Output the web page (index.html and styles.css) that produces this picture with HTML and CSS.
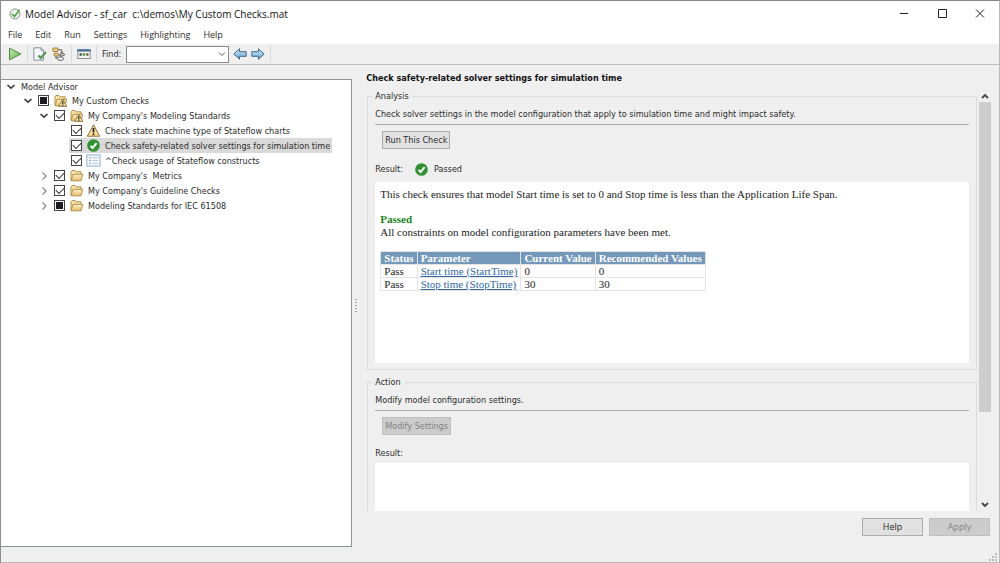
FILE: index.html
```html
<!DOCTYPE html>
<html lang="en">
<head>
<meta charset="utf-8">
<title>Model Advisor - sf_car</title>
<link rel="stylesheet" href="styles.css">
</head>
<body>
<svg class="defs" aria-hidden="true">
  <defs>
    <linearGradient id="gold" x1="0" y1="0" x2="0" y2="1"><stop offset="0" stop-color="#fff3c8"/><stop offset="1" stop-color="#e5bb66"/></linearGradient>
    <linearGradient id="blue" x1="0" y1="0" x2="0" y2="1"><stop offset="0" stop-color="#d9effc"/><stop offset="1" stop-color="#5d9fd0"/></linearGradient>
    <linearGradient id="lime" x1="0" y1="0" x2="1" y2="1"><stop offset="0" stop-color="#c9efb4"/><stop offset="1" stop-color="#5fb04c"/></linearGradient>
    <symbol id="open" viewBox="0 0 12 12"><path d="M2.5 4 6 7.200 9.500 4" fill="none" stroke="#3a3a3e" stroke-width="1.600"/></symbol>
    <symbol id="closed" viewBox="0 0 12 12"><path d="M4.500 2.500 8 6 4.500 9.500" fill="none" stroke="#8b8b8b" stroke-width="1.300"/></symbol>
    <symbol id="folder" viewBox="0 0 14 13">
      <path d="M1.500 11V2.800L2.500 1.500H5.500L6.500 2.800H11.500V5.500" fill="#f8e2a4" stroke="#b3904c" stroke-linejoin="round"/>
      <path d="M1.500 11.800 3.500 5.300H13.200L11.500 11.800Z" fill="url(#gold)" stroke="#b3904c" stroke-linejoin="round"/>
    </symbol>
    <symbol id="triangle" viewBox="0 0 14 13">
      <path d="M7 .8 13.200 12.200H.8Z" fill="#fbdf94" stroke="#8a6f3a" stroke-linejoin="round"/>
      <path d="M7 4V8.500M7 9.600V11.200" stroke="#1b1b1b" stroke-width="1.700"/>
    </symbol>
    <symbol id="folder-warn" viewBox="0 0 14 13">
      <use href="#folder" width="14" height="13"/>
      <path d="M9.300 5 13.300 12.400H5.300Z" fill="#fbdf94" stroke="#7d6433" stroke-width=".8" stroke-linejoin="round"/>
      <path d="M9.300 7.200V10M9.300 10.600V11.700" stroke="#222" stroke-width="1.200"/>
    </symbol>
    <symbol id="pass" viewBox="0 0 14 14">
      <circle cx="7" cy="7" r="6.800" fill="#329133"/>
      <path d="M3.800 7.300 6.100 9.700 10.300 4.500" fill="none" stroke="#fff" stroke-width="2"/>
    </symbol>
    <symbol id="list" viewBox="0 0 14 12">
      <rect x=".8" y=".8" width="12.400" height="10.400" fill="#f3f8fd" stroke="#9cb6cc"/>
      <path d="M3 3.500H4.500M3 6H4.500M3 8.500H4.500" stroke="#5f93c0"/>
      <path d="M6 3.500H11.500M6 6H11.500M6 8.500H11.500" stroke="#b9cad8"/>
    </symbol>
    <symbol id="arrow" viewBox="0 0 14 12">
      <path d="M.8 6 6.500.8V3.700H13.200V8.300H6.500V11.200Z" fill="url(#blue)" stroke="#41688a" stroke-linejoin="round"/>
    </symbol>
  </defs>
</svg>

<div class="window">
  <header class="titlebar">
    <svg class="app-icon" viewBox="0 0 12 12"><circle cx="6" cy="6" r="5" fill="#eef1ec" stroke="#8d958c"/><path d="M3 6 5.500 8.500 10.500 1.800" fill="none" stroke="#4ba03f" stroke-width="1.600"/></svg>
    <h1 class="window-title">Model Advisor - sf_car&nbsp; c:\demos\My Custom Checks.mat</h1>
    <div class="window-controls">
      <button aria-label="Minimize"><svg viewBox="0 0 10 10"><path d="M1 4.500H9" stroke="#222"/></svg></button>
      <button aria-label="Maximize"><svg viewBox="0 0 10 10"><path d="M1.500.5H9.500V8.500H1.500Z" fill="none" stroke="#222"/></svg></button>
      <button aria-label="Close"><svg viewBox="0 0 10 10"><path d="M1 .5 9 8.500M9 .5 1 8.500" stroke="#222"/></svg></button>
    </div>
  </header>

  <nav class="menubar" aria-label="Menu">
    <button>File</button><button>Edit</button><button>Run</button><button>Settings</button><button>Highlighting</button><button>Help</button>
  </nav>

  <div class="toolbar">
    <button class="tool" aria-label="Run"><svg viewBox="0 0 14 14"><path d="M1.500 1.200 12.800 7 1.500 12.800Z" fill="url(#lime)" stroke="#4c8743" stroke-linejoin="round"/></svg></button>
    <span class="divider"></span>
    <button class="tool" aria-label="Report"><svg viewBox="0 0 14 14"><path d="M.8.8H8L10.500 3.300V13.200H.8Z" fill="#f1f4f8" stroke="#8b929c"/><path d="M8 .8V3.300H10.500" fill="none" stroke="#8b929c"/><path d="M5.500 8.500 7.800 11 13 5" fill="none" stroke="#569a52" stroke-width="2.200"/></svg></button>
    <button class="tool" aria-label="Highlight model"><svg viewBox="0 0 14 14"><path d="M5 2.800H9.500L10.500 6M9 8H5L3.500 11H6" fill="none" stroke="#555"/><rect x=".8" y="1" width="5.200" height="3.500" rx="1" fill="#f3cd7c" stroke="#9d7a38"/><rect x="2" y="6.200" width="4.500" height="2.800" rx="1" fill="#f3cd7c" stroke="#9d7a38"/><path d="M8.800 5.500 13 7.500 8.800 9.500Z" fill="#f5f5f5" stroke="#555"/><rect x="5.500" y="10" width="6" height="3.200" rx="1.500" fill="#f7f7f7" stroke="#666"/></svg></button>
    <span class="divider"></span>
    <button class="tool" aria-label="Preferences"><svg viewBox="0 0 14 14"><rect x=".8" y="2.500" width="12.400" height="9" fill="#f4f4ee" stroke="#8593a1"/><path d="M.5 3.500H13.500" stroke="#4a6f9b" stroke-width="2.200"/><path d="M2.500 7.500H4.800" stroke="#444" stroke-width="2.400"/><path d="M5.800 7.500H8.200" stroke="#3b9a3b" stroke-width="2.400"/><path d="M9.200 7.500H11.500" stroke="#6a5a3a" stroke-width="2.400"/></svg></button>
    <span class="divider"></span>
    <label class="find-label" for="find">Find:</label>
    <div class="find-group">
      <div class="combo">
        <input id="find" type="text">
        <button aria-label="Show search history"><svg viewBox="0 0 12 12"><path d="M3 4.500 6 7.500 9 4.500" fill="none" stroke="#555"/></svg></button>
      </div>
      <button class="tool" aria-label="Find previous"><svg viewBox="0 0 14 12"><use href="#arrow"/></svg></button>
      <button class="tool" aria-label="Find next"><svg class="flip" viewBox="0 0 14 12"><use href="#arrow"/></svg></button>
    </div>
    <span class="divider"></span>
  </div>

  <main class="workspace">
    <section class="explorer" aria-label="Checks">
      <ul class="tree">
        <li>
          <div class="row root"><button class="twisty" aria-label="Collapse"><svg><use href="#open"/></svg></button><span>Model Advisor</span></div>
          <ul class="folders">
            <li>
              <div class="row"><button class="twisty" aria-label="Collapse"><svg><use href="#open"/></svg></button><input class="partial" type="checkbox" id="c1"><svg class="icon"><use href="#folder-warn"/></svg><label for="c1">My Custom Checks</label></div>
              <ul>
                <li>
                  <div class="row"><button class="twisty" aria-label="Collapse"><svg><use href="#open"/></svg></button><input type="checkbox" id="c2" checked><svg class="icon"><use href="#folder-warn"/></svg><label for="c2">My Company's Modeling Standards</label></div>
                  <ul class="checks">
                    <li><div class="row leaf"><input type="checkbox" id="c3" checked><svg class="icon"><use href="#triangle"/></svg><label for="c3">Check state machine type of Stateflow charts</label></div></li>
                    <li><div class="row leaf selected"><input type="checkbox" id="c4" checked><svg class="icon"><use href="#pass"/></svg><label for="c4">Check safety-related solver settings for simulation time</label></div></li>
                    <li><div class="row leaf"><input type="checkbox" id="c5" checked><svg class="icon"><use href="#list"/></svg><label for="c5">^Check usage of Stateflow constructs</label></div></li>
                  </ul>
                </li>
                <li><div class="row"><button class="twisty" aria-label="Expand"><svg><use href="#closed"/></svg></button><input type="checkbox" id="c6" checked><svg class="icon"><use href="#folder"/></svg><label for="c6">My Company's&nbsp; Metrics</label></div></li>
                <li><div class="row"><button class="twisty" aria-label="Expand"><svg><use href="#closed"/></svg></button><input type="checkbox" id="c7" checked><svg class="icon"><use href="#folder"/></svg><label for="c7">My Company's Guideline Checks</label></div></li>
                <li><div class="row"><button class="twisty" aria-label="Expand"><svg><use href="#closed"/></svg></button><input class="partial" type="checkbox" id="c8"><svg class="icon"><use href="#folder"/></svg><label for="c8">Modeling Standards for IEC 61508</label></div></li>
              </ul>
            </li>
          </ul>
        </li>
      </ul>
    </section>

    <div class="splitter" role="separator"></div>

    <section class="details">
      <h2 class="details-title">Check safety-related solver settings for simulation time</h2>
      <div class="scroller">
        <div class="groups">
          <fieldset class="group">
            <legend>Analysis</legend>
            <p class="description">Check solver settings in the model configuration that apply to simulation time and might impact safety.</p>
            <button class="push">Run This Check</button>
            <div class="result"><span>Result:</span><svg class="status"><use href="#pass"/></svg><span>Passed</span></div>
            <div class="output">
              <p>This check ensures that model Start time is set to 0 and Stop time is less than the Application Life Span.</p>
              <p class="verdict"><strong>Passed</strong><br>All constraints on model configuration parameters have been met.</p>
              <table>
                <thead><tr><th>Status</th><th>Parameter</th><th>Current Value</th><th>Recommended Values</th></tr></thead>
                <tbody>
                  <tr><td>Pass</td><td><a href="#">Start time (StartTime)</a></td><td>0</td><td>0</td></tr>
                  <tr><td>Pass</td><td><a href="#">Stop time (StopTime)</a></td><td>30</td><td>30</td></tr>
                </tbody>
              </table>
            </div>
          </fieldset>
          <fieldset class="group">
            <legend>Action</legend>
            <p class="description">Modify model configuration settings.</p>
            <button class="push" disabled>Modify Settings</button>
            <div class="result compact"><span>Result:</span></div>
            <div class="output"></div>
          </fieldset>
        </div>
        <div class="scrollbar">
          <button aria-label="Scroll up"><svg viewBox="0 0 12 12"><path d="M3 8 6 5 9 8" fill="none" stroke="#444" stroke-width="1.800"/></svg></button>
          <div class="track"><div class="thumb"></div></div>
          <button aria-label="Scroll down"><svg viewBox="0 0 12 12"><path d="M3 4 6 7 9 4" fill="none" stroke="#444" stroke-width="1.800"/></svg></button>
        </div>
      </div>
      <div class="actions"><button class="command">Help</button><button class="command" disabled>Apply</button></div>
    </section>
  </main>
  <footer class="statusbar"><svg class="grip" viewBox="0 0 8 8"><path d="M6 0H8V2H6ZM3 3H5V5H3ZM6 3H8V5H6ZM0 6H2V8H0ZM3 6H5V8H3ZM6 6H8V8H6Z" fill="#bcbcbc"/></svg></footer>
</div>
</body>
</html>
```
FILE: styles.css
```css
* { box-sizing: border-box; }
body { margin: 0; font: 9px/12px "DejaVu Sans Condensed", "DejaVu Sans", sans-serif; color: #2b2b2b; }
button, input { font: inherit; color: inherit; margin: 0; padding: 0; }
button { background: none; border: 0; }
svg { display: block; }
ul { list-style: none; margin: 0; padding: 0; }
h1, h2, p { margin: 0; }
.defs { position: absolute; width: 0; height: 0; }

.window {
  display: flex;
  flex-direction: column;
  height: 100vh;
  background: #efefef;
  border: 1px solid #b9b9b9;
  border-top-color: #868686;
  border-left-color: #8c8c94;
  overflow: hidden;
}

.titlebar { display: flex; align-items: center; height: 25px; padding-left: 8px; background: #fff; }
.app-icon { width: 12px; height: 12px; }
.window-title { flex: 1; margin-left: 4px; font: 10px/16px "Open Sans", sans-serif; color: #111; }
.window-controls { display: flex; gap: 16px; padding-right: 8px; }
.window-controls button { display: grid; place-items: center; width: 22px; height: 20px; }
.window-controls svg { width: 10px; height: 10px; }

.menubar { display: flex; gap: 13px; height: 18px; padding: 0 7px; background: #fff; font: 9px/18px "Open Sans", sans-serif; }

.toolbar { display: flex; align-items: center; gap: 5px; height: 21px; padding-left: 7px; border-bottom: 1px solid #bdbdbd; }
.tool { width: 14px; height: 14px; }
.tool svg { width: 14px; height: 14px; }
.flip { transform: scaleX(-1); }
.divider { width: 1px; height: 16px; background: #d9d9d9; }
.find-group { display: flex; align-items: center; gap: 4px; }
.combo { display: flex; align-items: center; width: 103px; height: 17px; background: #fff; border: 1px solid #8a8a8a; }
.combo input { flex: 1; min-width: 0; height: 100%; border: 0; background: none; padding: 0 3px; }
.combo svg { width: 12px; height: 12px; }

.workspace { display: flex; flex: 1; min-height: 0; }
.explorer { flex: 0 0 35.2%; margin-top: 14px; background: #fff; border: 1px solid #8d939c; border-left: 0; padding-left: 4px; overflow: hidden; }
.row { display: flex; align-items: center; gap: 4px; height: 15px; width: max-content; }
.row.root { height: 13px; }
.folders { padding-left: 17px; }
.folders ul { padding-left: 16px; }
.folders .checks { padding-left: 17px; }
.leaf { margin-left: 14px; padding: 0 2px; }
.selected { background: #d9d9d9; }
.twisty, .twisty svg { width: 12px; height: 12px; }
.icon { width: 15px; height: 13px; }
.row input { appearance: none; width: 11px; height: 11px; border: 1px solid #444; background: #fff; display: grid; place-items: center; }
.row input:checked::before { content: ""; width: 7px; height: 4px; margin-bottom: 2px; border: solid #333; border-width: 0 0 1px 1px; transform: rotate(-45deg); }
.row .partial::before { content: ""; width: 7px; height: 7px; background: #1c1c22; }

.splitter { width: 8px; display: grid; place-items: center; }
.splitter::before { content: ""; width: 2px; height: 15px; background: repeating-linear-gradient(#a5a5a5 0 1px, transparent 1px 3px); }

.details { flex: 1; min-width: 0; display: flex; flex-direction: column; padding: 7px 8px 0 6px; }
.details-title { font-size: 9px; line-height: 12px; color: #111; }
.scroller { flex: 1; min-height: 0; display: flex; gap: 2px; margin-top: 6px; overflow: hidden; }
.groups { flex: 1; min-width: 0; overflow: hidden; display: flex; flex-direction: column; gap: 6px; padding-left: 1px; }
.group { flex: none; margin: 0; padding: 6px 7px; min-width: 0; border: 1px solid #dcdcdc; }
.group legend { padding: 0 3px 0 2px; margin-left: -2px; }
.description { padding-bottom: 4px; border-bottom: 1px solid #a9a9a9; }
.push { display: block; height: 18px; margin: 6px 7px 0; padding: 0 2px; background: #e1e1e1; border: 1px solid #adadad; }
.push:disabled, .command:disabled { background: #cccccc; border-color: #bfbfbf; color: #838383; }
.result { display: flex; align-items: center; height: 14px; margin: 13px 0 6px; }
.result.compact { margin: 11px 0 3px; }
.status { width: 13px; height: 13px; margin: 0 6px 0 12px; }
.output { min-height: 181px; padding: 6px 5px; background: #fff; font: 11px/13px "Liberation Serif", serif; color: #222; }
.verdict { margin-top: 12px; }
.verdict strong { color: #168016; }
.output table { margin-top: 12px; border-collapse: collapse; }
.output th, .output td { padding: 0 3px; border: 1px solid #e4e4e4; text-align: left; line-height: 12px; }
.output th { background: #7398ba; color: #fff; }
.output a { color: #2f68a4; }

.scrollbar { width: 12px; display: flex; flex-direction: column; }
.scrollbar button { height: 12px; }
.scrollbar svg { width: 12px; height: 12px; }
.track { flex: 1; }
.thumb { height: 78%; background: #cdcdcd; }
.actions { display: flex; justify-content: flex-end; gap: 6px; padding: 7px 1px 11px 0; }
.command { width: 61px; height: 18px; background: #e1e1e1; border: 1px solid #adadad; font-family: "Open Sans", sans-serif; }
.statusbar { display: flex; justify-content: flex-end; align-items: flex-end; height: 15px; padding: 0 2px 1px 0; }
.grip { width: 8px; height: 8px; }
```
